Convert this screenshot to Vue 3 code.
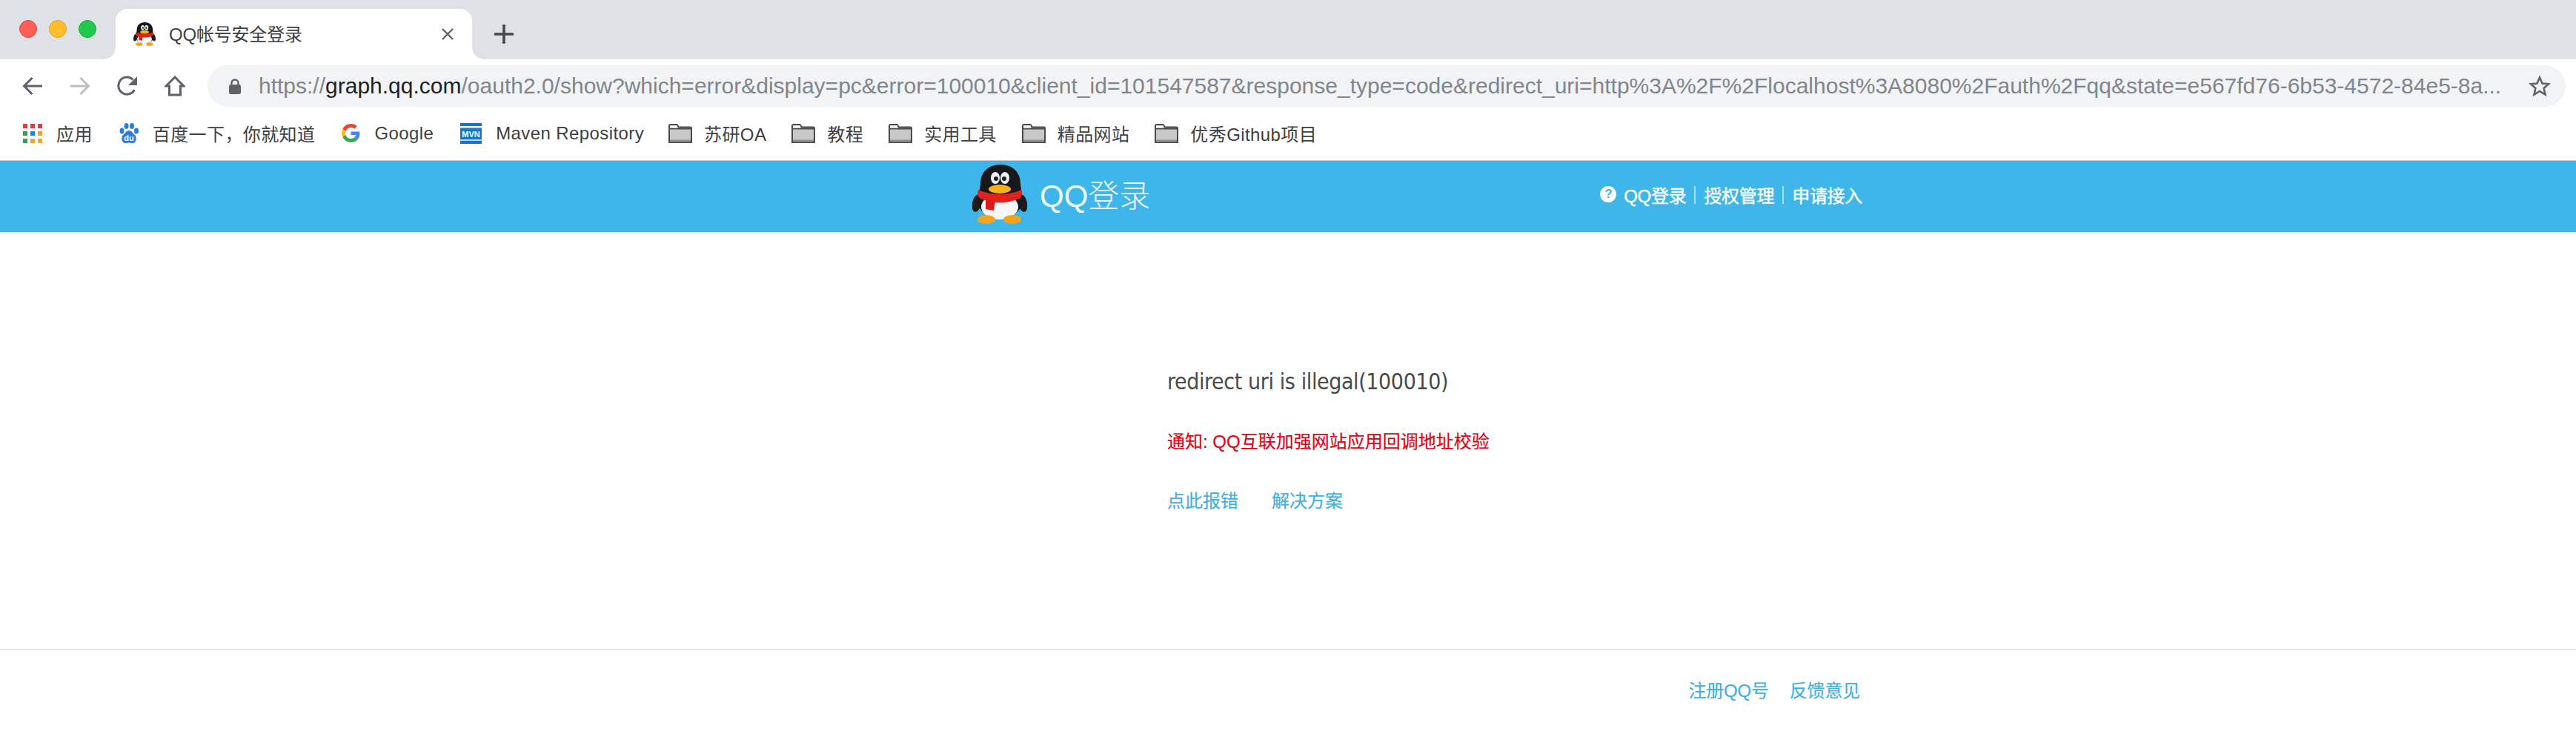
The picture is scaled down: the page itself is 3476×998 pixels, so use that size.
<template>
  <div class="page">
    <svg class="defs" width="0" height="0">
      <symbol id="penguin" viewBox="0 0 74 80">
        <ellipse cx="6" cy="52" rx="6" ry="12" fill="#1c1c20" transform="rotate(12 6 52)" />
        <ellipse cx="68" cy="52" rx="6" ry="12" fill="#1c1c20" transform="rotate(-12 68 52)" />
        <path d="M11 26C11 9 23 0 38 0s27 9 27 26l3 22c0 14-14 24-31 24S7 62 8 48z" fill="#18181c" />
        <ellipse cx="37" cy="57" rx="25" ry="17" fill="#f4f6f8" />
        <ellipse cx="19" cy="74" rx="12" ry="6" fill="#f7a21b" />
        <ellipse cx="54" cy="74" rx="12" ry="6" fill="#f7a21b" />
        <ellipse cx="31" cy="18" rx="6" ry="8" fill="#eef0f0" />
        <ellipse cx="44" cy="18" rx="6" ry="8" fill="#eef0f0" />
        <circle cx="32" cy="19" r="3" fill="#222" />
        <circle cx="43" cy="19" r="3" fill="#222" />
        <path d="M8 34c18 8 40 8 58 0 2 5 1 10-3 12-17 7-34 7-52 0-4-3-5-7-3-12z" fill="#e2211c" />
        <path d="M18 46l13 3-2 13-11-2z" fill="#d81d18" />
        <ellipse cx="37" cy="33" rx="15" ry="6" fill="#f6b21c" />
      </symbol>
      <symbol id="folder" viewBox="0 0 32 26">
        <path d="M1 25V2.500C1 1.600 1.600 1 2.500 1h9L14 4.500h15.500c.9 0 1.500.6 1.500 1.500v19z" fill="#c8c8c8" stroke="#4a4a4a" stroke-width="2" />
        <path d="M2 6.500h28" stroke="#4a4a4a" stroke-width="2" fill="none" />
        <path d="M2 4h10" stroke="#fff" stroke-width="3" fill="none" />
        <path d="M2 21.500h28v3H2z" fill="#8f8f8f" />
      </symbol>
    </svg>

    <div class="tab-strip">
      <div class="lights">
        <span class="light red"></span>
        <span class="light amber"></span>
        <span class="light green"></span>
      </div>
      <div class="tab">
        <svg class="favicon" width="30" height="32"><use href="#penguin" /></svg>
        <span class="tab-title">QQ帐号安全登录</span>
        <svg class="tab-close" width="18" height="18" viewBox="0 0 18 18">
          <path d="M2 2l14 14M16 2L2 16" stroke="#5f6368" stroke-width="2.400" fill="none" />
        </svg>
      </div>
      <svg class="new-tab" width="26" height="26" viewBox="0 0 26 26">
        <path d="M13 1v24M1 13h24" stroke="#45484d" stroke-width="3.600" stroke-linecap="round" fill="none" />
      </svg>
    </div>

    <div class="toolbar">
      <svg class="nav-icon" width="28" height="28" viewBox="0 0 28 28">
        <path d="M27 14H3M13.500 3L2.500 14l11 11" stroke="#5f6368" stroke-width="3" fill="none" />
      </svg>
      <svg class="nav-icon" width="28" height="28" viewBox="0 0 28 28">
        <path d="M1 14h24M14.500 3l11 11-11 11" stroke="#bcbec1" stroke-width="3" fill="none" />
      </svg>
      <svg class="nav-icon" width="28" height="28" viewBox="0 0 28 28">
        <path d="M23.500 19A11.500 11.500 0 1 1 21.500 5.500" stroke="#5f6368" stroke-width="3" fill="none" />
        <path d="M27 1v12H15z" fill="#5f6368" />
      </svg>
      <svg class="nav-icon" width="28" height="28" viewBox="0 0 28 28">
        <path d="M14 2L2 14h4.500v12h15V14H26z" stroke="#5f6368" stroke-width="3" stroke-linejoin="miter" fill="none" />
      </svg>
      <div class="omnibox">
        <svg class="lock" width="18" height="21" viewBox="0 0 18 21">
          <path d="M4.500 9V6a4.500 4.500 0 0 1 9 0v3" stroke="#5f6368" stroke-width="2.400" fill="none" />
          <rect x="1" y="8" width="16" height="13" rx="2.500" fill="#5f6368" />
        </svg>
        <div class="url"><span class="url-dim">https://</span><span class="url-host">graph.qq.com</span><span class="url-dim">/oauth2.0/show?which=error&amp;display=pc&amp;error=100010&amp;client_id=101547587&amp;response_type=code&amp;redirect_uri=http%3A%2F%2Flocalhost%3A8080%2Fauth%2Fqq&amp;state=e567fd76-6b53-4572-84e5-8a...</span></div>
        <svg class="star" width="30" height="30" viewBox="0 0 30 30">
          <path d="M15 3.500l3.500 8 8.500.8-6.400 5.700 1.900 8.500L15 22l-7.500 4.500 1.900-8.500L3 12.300l8.500-.8z" stroke="#5f6368" stroke-width="2.600" fill="none" />
        </svg>
      </div>
    </div>

    <div class="bookmarks">
      <div v-for="b in bookmarks" :key="b.label" class="bookmark" :class="'is-' + b.icon">
        <svg v-if="b.icon === 'apps'" width="26" height="26" viewBox="0 0 26 26">
          <rect v-for="c in appCells" :key="c.x + '-' + c.y" :x="c.x" :y="c.y" width="6" height="6" :fill="c.fill" />
        </svg>
        <svg v-else-if="b.icon === 'baidu'" width="26" height="28" viewBox="0 0 26 28">
          <ellipse cx="3.500" cy="10.500" rx="3" ry="4" fill="#2a7de1" />
          <ellipse cx="9.500" cy="4" rx="3" ry="4" fill="#2a7de1" />
          <ellipse cx="17" cy="4" rx="3" ry="4" fill="#2a7de1" />
          <ellipse cx="23" cy="10.500" rx="3" ry="4" fill="#2a7de1" />
          <path d="M13 10c4 0 5 4 8 6 3 3 2 11-3 11-2 0-3-.5-5-.5s-3 .5-5 .5c-5 0-6-8-3-11 3-2 4-6 8-6z" fill="#2a7de1" />
          <text x="13" y="24" text-anchor="middle" class="du">du</text>
        </svg>
        <svg v-else-if="b.icon === 'google'" width="25" height="25" viewBox="0 0 48 48">
          <path fill="#EA4335" d="M24 9.500c3.540 0 6.710 1.220 9.210 3.600l6.850-6.850C35.900 2.380 30.470 0 24 0 14.620 0 6.510 5.380 2.560 13.220l7.980 6.190C12.430 13.720 17.740 9.500 24 9.500z" />
          <path fill="#4285F4" d="M46.980 24.550c0-1.570-.15-3.090-.38-4.550H24v9.020h12.940c-.58 2.960-2.260 5.480-4.780 7.180l7.730 6c4.510-4.180 7.090-10.360 7.090-17.650z" />
          <path fill="#FBBC05" d="M10.530 28.590c-.48-1.450-.76-2.990-.76-4.590s.27-3.140.76-4.590l-7.980-6.190C.92 16.460 0 20.120 0 24c0 3.880.92 7.540 2.560 10.780l7.970-6.190z" />
          <path fill="#34A853" d="M24 48c6.480 0 11.930-2.130 15.890-5.810l-7.730-6c-2.150 1.450-4.920 2.300-8.160 2.300-6.260 0-11.570-4.220-13.470-9.910l-7.980 6.190C6.510 42.620 14.620 48 24 48z" />
        </svg>
        <svg v-else-if="b.icon === 'mvn'" width="29" height="28" viewBox="0 0 29 28">
          <rect width="29" height="4" fill="#0f76d2" />
          <rect y="5" width="29" height="2" fill="#bcd7f1" />
          <rect y="7" width="29" height="15" fill="#0f76d2" />
          <rect y="22" width="29" height="2" fill="#bcd7f1" />
          <rect y="24" width="29" height="4" fill="#0f76d2" />
          <text x="14.500" y="19" text-anchor="middle" class="mvn">MVN</text>
        </svg>
        <svg v-else width="32" height="26"><use href="#folder" /></svg>
        <span class="bookmark-label">{{ b.label }}</span>
      </div>
    </div>

    <header class="site-header">
      <div class="container header-row">
        <div class="logo">
          <svg width="74" height="80"><use href="#penguin" /></svg>
          <span class="logo-text">QQ登录</span>
        </div>
        <nav class="site-nav">
          <span class="help-dot">?</span>
          <a>QQ登录</a>
          <i class="sep"></i>
          <a>授权管理</a>
          <i class="sep"></i>
          <a>申请接入</a>
        </nav>
      </div>
    </header>

    <main class="content">
      <h1 class="error-title">redirect uri is illegal(100010)</h1>
      <p class="notice">通知: QQ互联加强网站应用回调地址校验</p>
      <div class="links">
        <a>点此报错</a>
        <a>解决方案</a>
      </div>
    </main>

    <footer class="site-footer">
      <div class="container footer-row">
        <a>注册QQ号</a>
        <a>反馈意见</a>
      </div>
    </footer>
  </div>
</template>

<script setup>
const bookmarks = [
  { label: '应用', icon: 'apps' },
  { label: '百度一下，你就知道', icon: 'baidu' },
  { label: 'Google', icon: 'google' },
  { label: 'Maven Repository', icon: 'mvn' },
  { label: '苏研OA', icon: 'folder' },
  { label: '教程', icon: 'folder' },
  { label: '实用工具', icon: 'folder' },
  { label: '精品网站', icon: 'folder' },
  { label: '优秀Github项目', icon: 'folder' },
]

const appColors = ['#ea3539', '#ea3539', '#ea3539', '#34a05a', '#1a86e8', '#f4a32e', '#34a05a', '#f4a32e', '#f4a32e']
const appCells = appColors.map((fill, i) => ({ x: (i % 3) * 10, y: Math.floor(i / 3) * 10, fill }))
</script>

<style>
html,
body {
  margin: 0;
  background: #fff;
}
</style>

<style scoped>
.page {
  width: 3476px;
  height: 998px;
  display: flex;
  flex-direction: column;
  overflow: hidden;
  font-family: "Liberation Sans", "Noto Sans CJK SC", sans-serif;
  background: #fff;
}

.defs {
  position: absolute;
}

.tab-strip {
  height: 80px;
  flex: none;
  display: flex;
  align-items: flex-end;
  background: #dee1e6;
}

.lights {
  width: 156px;
  box-sizing: border-box;
  padding: 0 0 29px 26px;
  display: flex;
  gap: 16px;
}

.light {
  width: 24px;
  height: 24px;
  border-radius: 50%;
  box-sizing: border-box;
}

.red { background: #ff5f57; border: 1px solid #e2463f; }
.amber { background: #ffbd2e; border: 1px solid #e1a116; }
.green { background: #1fc94b; border: 1px solid #1aab3a; }

.tab {
  position: relative;
  width: 481px;
  height: 68px;
  box-sizing: border-box;
  padding: 0 24px 0 24px;
  display: flex;
  align-items: center;
  background: #fff;
  border-radius: 16px 16px 0 0;
}

.tab::before,
.tab::after {
  content: "";
  position: absolute;
  bottom: 0;
  width: 16px;
  height: 16px;
}

.tab::before {
  left: -16px;
  background: radial-gradient(circle at 0 0, #dee1e6 15.500px, #fff 16px);
}

.tab::after {
  right: -16px;
  background: radial-gradient(circle at 100% 0, #dee1e6 15.500px, #fff 16px);
}

.favicon {
  flex: none;
}

.tab-title {
  margin: -3px 0 0 18px;
  flex: 1;
  font-size: 24px;
  letter-spacing: -0.2px;
  color: #3c4043;
}

.tab-close {
  flex: none;
}

.new-tab {
  margin: 0 0 21px 30px;
}

.toolbar {
  height: 70px;
  flex: none;
  box-sizing: border-box;
  padding: 8px 14px 6px 30px;
  display: flex;
  align-items: flex-start;
  gap: 36px;
}

.nav-icon {
  flex: none;
  margin-top: 14px;
}

.omnibox {
  flex: 1;
  height: 56px;
  margin-left: -6px;
  box-sizing: border-box;
  padding: 0 20px 0 28px;
  display: flex;
  align-items: center;
  background: #f1f3f4;
  border-radius: 28px;
  min-width: 0;
}

.lock {
  flex: none;
}

.url {
  flex: 1;
  margin-left: 23px;
  white-space: nowrap;
  overflow: hidden;
  font-size: 30px;
  min-width: 0;
}

.url-dim {
  color: #80868b;
}

.url-host {
  color: #202124;
}

.star {
  flex: none;
}

.bookmarks {
  height: 67px;
  flex: none;
  box-sizing: border-box;
  padding: 0 0 7px 31px;
  display: flex;
  align-items: center;
  gap: 36px;
  border-bottom: 1px solid #c9cbcf;
}

.bookmark {
  display: flex;
  align-items: center;
  gap: 19px;
}

.bookmark.is-mvn {
  margin-right: -3px;
}

.bookmark.is-folder {
  gap: 16px;
  margin-right: -2px;
}

.bookmark svg {
  flex: none;
}

.bookmark-label {
  font-size: 24px;
  letter-spacing: 0.4px;
  color: #3c4043;
}

.du {
  font: 700 11px "Liberation Sans", sans-serif;
  fill: #fff;
}

.mvn {
  font: 700 11px "Liberation Sans", sans-serif;
  fill: #fff;
}

.container {
  width: 1550px;
  margin: 0 auto;
}

.site-header {
  height: 96px;
  flex: none;
  background: #3fb6ea;
}

.header-row {
  height: 100%;
  display: flex;
  align-items: center;
  justify-content: space-between;
}

.logo {
  margin: -6px 0 0 349px;
  display: flex;
  align-items: center;
  gap: 17px;
}

.logo-text {
  margin-top: -4px;
  font-size: 42px;
  font-weight: 300;
  color: #eef9fe;
}

.site-nav {
  margin-top: -6px;
  display: flex;
  align-items: center;
  color: #fff;
  font-size: 24px;
  letter-spacing: -0.3px;
  -webkit-text-stroke: 0.4px #fff;
}

.help-dot {
  width: 22px;
  height: 22px;
  margin-right: 10px;
  border-radius: 50%;
  background: #fff;
  color: #3fb6ea;
  font-size: 17px;
  font-weight: 700;
  line-height: 22px;
  text-align: center;
  -webkit-text-stroke: 0;
}

.sep {
  width: 2px;
  height: 24px;
  margin: 2px 11px 0;
  background: #a9def5;
}

.content {
  flex: 1;
  box-sizing: border-box;
  padding: 179px 0 0 1575px;
}

.error-title {
  margin: 0;
  font-family: "DejaVu Sans", sans-serif;
  font-stretch: condensed;
  font-size: 30px;
  letter-spacing: -0.4px;
  font-weight: 400;
  line-height: 46px;
  color: #4a4a4a;
}

.notice {
  margin: 41px 0 0;
  font-size: 24px;
  line-height: 34px;
  color: #e60012;
  -webkit-text-stroke: 0.2px #e60012;
}

.links {
  margin-top: 46px;
  display: flex;
  gap: 45px;
  font-size: 24px;
  line-height: 34px;
  color: #3fb0e4;
  -webkit-text-stroke: 0.2px #3fb0e4;
}

.site-footer {
  height: 123px;
  flex: none;
  box-sizing: border-box;
  border-top: 2px solid #e5e5e5;
}

.footer-row {
  box-sizing: border-box;
  padding: 38px 3px 0 0;
  display: flex;
  justify-content: flex-end;
  gap: 28px;
  font-size: 24px;
  letter-spacing: -0.2px;
  line-height: 34px;
  color: #3fb0e4;
  -webkit-text-stroke: 0.2px #3fb0e4;
}
</style>
